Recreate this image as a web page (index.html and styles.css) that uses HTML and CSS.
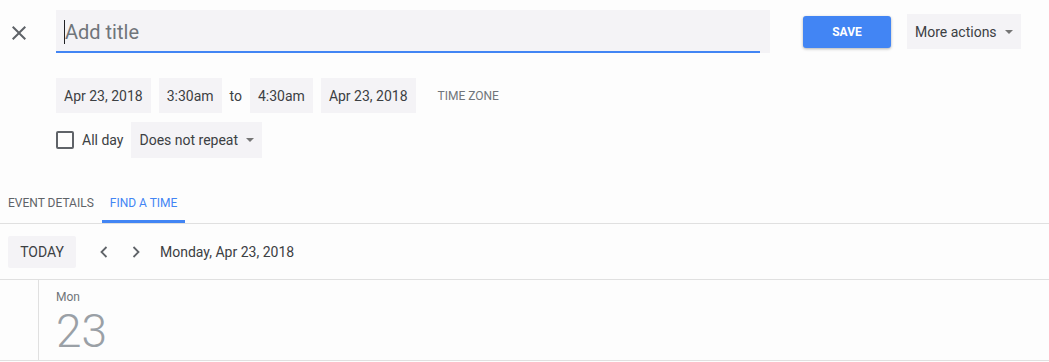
FILE: index.html
```html
<!DOCTYPE html>
<html lang="en">
<head>
    <meta charset="UTF-8">
    <meta name="viewport" content="width=device-width, initial-scale=1.0">
    <title>Edit event</title>
    <link rel="stylesheet" href="styles.css">
</head>
<body>
    <div class="header">
        <button class="close" aria-label="Close">
            <svg width="24" height="24" viewBox="0 0 24 24"><path d="M19 6.41L17.59 5 12 10.59 6.41 5 5 6.41 10.59 12 5 17.59 6.41 19 12 13.41 17.59 19 19 17.59 13.41 12z" fill="#5f6368"/></svg>
        </button>
        <div class="title-field">
            <div class="title-input"><span class="caret"></span>Add title</div>
        </div>
        <button class="save">SAVE</button>
        <div class="more">More actions <span class="arrow"></span></div>
    </div>

    <div class="when">
        <div class="chip">Apr 23, 2018</div>
        <div class="chip">3:30am</div>
        <span class="to">to</span>
        <div class="chip">4:30am</div>
        <div class="chip">Apr 23, 2018</div>
        <span class="tz">TIME ZONE</span>
    </div>

    <div class="repeat-row">
        <span class="checkbox"></span>
        <span class="allday">All day</span>
        <div class="chip chip-tall">Does not repeat <span class="arrow"></span></div>
    </div>

    <div class="tabs">
        <div class="tab">EVENT DETAILS</div>
        <div class="tab active">FIND A TIME</div>
    </div>

    <div class="toolbar">
        <button class="today">TODAY</button>
        <button class="nav nav-prev" aria-label="Previous">
            <svg width="20" height="20" viewBox="0 0 20 20"><polyline points="12.5,5 7.5,10 12.5,15" fill="none" stroke="#5f6368" stroke-width="1.8"/></svg>
        </button>
        <button class="nav" aria-label="Next">
            <svg width="20" height="20" viewBox="0 0 20 20"><polyline points="7.5,5 12.5,10 7.5,15" fill="none" stroke="#5f6368" stroke-width="1.8"/></svg>
        </button>
        <span class="date-label">Monday, Apr 23, 2018</span>
    </div>

    <div class="day-grid">
        <div class="gutter"></div>
        <div class="day-col">
            <div class="dow">Mon</div>
            <div class="dom">23</div>
        </div>
    </div>
</body>
</html>
```

FILE: styles.css
```css
body {
    margin: 0;
    font-family: Roboto, "Liberation Sans", Arial, sans-serif;
    color: #3c4043;
    background: #fdfdfd;
}
button {
    font-family: inherit;
    border: none;
    background: none;
    padding: 0;
    cursor: pointer;
}
.header {
    display: flex;
    align-items: flex-start;
    padding-top: 10px;
}
.close {
    width: 56px;
    height: 43px;
    display: flex;
    align-items: center;
    padding: 2px 0 0 7px;
}
.close svg {
    display: block;
}
.title-field {
    width: 714px;
    height: 43px;
    background: #f4f3f6;
}
.title-input {
    width: 704px;
    height: 43px;
    box-sizing: border-box;
    border-bottom: 2px solid #4285f4;
    font-size: 20px;
    color: #70757a;
    display: flex;
    align-items: center;
    padding: 3px 0 0 8px;
}
.caret {
    width: 1px;
    height: 24px;
    background: #202124;
}
.save {
    margin-left: 33px;
    margin-top: 6px;
    width: 88px;
    height: 32px;
    background: #4285f4;
    color: #fff;
    font-size: 12px;
    font-weight: 700;
    border-radius: 3px;
    box-shadow: 0 1px 3px rgba(0, 0, 0, 0.3);
}
.more {
    margin-left: 16px;
    margin-top: 4px;
    width: 114px;
    height: 35px;
    box-sizing: border-box;
    padding-left: 8px;
    background: #f4f3f6;
    font-size: 14px;
    display: flex;
    align-items: center;
    gap: 8px;
}
.arrow {
    width: 0;
    height: 0;
    border-left: 4px solid transparent;
    border-right: 4px solid transparent;
    border-top: 4px solid #757575;
}
.when {
    display: flex;
    align-items: center;
    margin: 25px 0 0 56px;
    font-size: 14px;
}
.chip {
    height: 35px;
    padding: 0 8px;
    display: flex;
    align-items: center;
    background: #f4f3f6;
    margin-right: 8px;
}
.to {
    margin-right: 8px;
}
.tz {
    margin-left: 14px;
    font-size: 12px;
    color: #70757a;
}
.repeat-row {
    display: flex;
    align-items: center;
    margin: 9px 0 0 56px;
    font-size: 14px;
}
.checkbox {
    width: 18px;
    height: 18px;
    box-sizing: border-box;
    border: 2px solid #5f6368;
    border-radius: 2px;
}
.allday {
    margin-left: 8px;
    margin-right: 8px;
}
.chip-tall {
    height: 36px;
    gap: 8px;
}
.tabs {
    display: flex;
    margin-top: 26px;
    border-bottom: 1px solid #e0e0e0;
}
.tab {
    padding: 12px 8px 10px;
    font-size: 12px;
    color: #5f6368;
    border-bottom: 3px solid transparent;
}
.tab.active {
    color: #4285f4;
    border-bottom-color: #4285f4;
}
.toolbar {
    display: flex;
    align-items: center;
    padding: 12px 8px 11px;
    border-bottom: 1px solid #e0e0e0;
}
.today {
    width: 68px;
    height: 32px;
    background: #f4f3f6;
    font-size: 14px;
    color: #3c4043;
    border-radius: 2px;
}
.nav {
    width: 32px;
    height: 32px;
    display: flex;
    align-items: center;
    justify-content: center;
}
.nav-prev {
    margin-left: 12px;
}
.date-label {
    margin-left: 8px;
    font-size: 14px;
}
.day-grid {
    display: flex;
    height: 80px;
    border-bottom: 1px solid #e0e0e0;
}
.gutter {
    width: 38px;
    border-right: 1px solid #e0e0e0;
}
.day-col {
    padding: 10px 0 0 17px;
}
.dow {
    font-size: 12px;
    color: #70757a;
}
.dom {
    font-size: 46px;
    font-weight: 300;
    color: #9aa0a6;
    line-height: 50px;
    margin-top: 2px;
}
```
